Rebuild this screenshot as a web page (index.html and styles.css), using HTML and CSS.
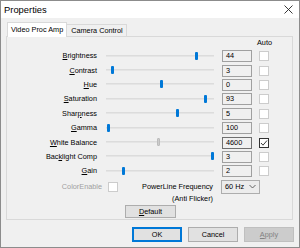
FILE: index.html
```html
<!DOCTYPE html>
<html>
<head>
<meta charset="utf-8">
<link rel="stylesheet" href="styles.css">
</head>
<body>
<div class="window">
  <div class="titlebar">
    <span class="title">Properties</span>
    <svg class="close" width="9" height="9" viewBox="0 0 9 9"><path d="M0.5 0.5L8.5 8.5M8.5 0.5L0.5 8.5" stroke="#222" stroke-width="0.9" fill="none"/></svg>
  </div>
  <div class="body">
    <div class="tabs">
      <div class="tab active">Video Proc Amp</div>
      <div class="tab">Camera Control</div>
    </div>
    <div class="panel">
      <div class="auto-head">Auto</div>
      <div class="grid">
        <div class="lbl"><u>B</u>rightness</div>
        <div class="slider"><div class="track"></div><div class="thumb" style="left:89px"></div></div>
        <div class="cell-val"><div class="val">44</div></div>
        <div class="cell-chk"><div class="chk"></div></div>

        <div class="lbl"><u>C</u>ontrast</div>
        <div class="slider"><div class="track"></div><div class="thumb" style="left:5px"></div></div>
        <div class="cell-val"><div class="val">3</div></div>
        <div class="cell-chk"><div class="chk"></div></div>

        <div class="lbl"><u>H</u>ue</div>
        <div class="slider"><div class="track"></div><div class="thumb" style="left:54px"></div></div>
        <div class="cell-val"><div class="val">0</div></div>
        <div class="cell-chk"><div class="chk"></div></div>

        <div class="lbl"><u>S</u>aturation</div>
        <div class="slider"><div class="track"></div><div class="thumb" style="left:98px"></div></div>
        <div class="cell-val"><div class="val">93</div></div>
        <div class="cell-chk"><div class="chk"></div></div>

        <div class="lbl">Shar<u>p</u>ness</div>
        <div class="slider"><div class="track"></div><div class="thumb" style="left:70px"></div></div>
        <div class="cell-val"><div class="val">5</div></div>
        <div class="cell-chk"><div class="chk"></div></div>

        <div class="lbl"><u>G</u>amma</div>
        <div class="slider"><div class="track"></div><div class="thumb" style="left:1px"></div></div>
        <div class="cell-val"><div class="val">100</div></div>
        <div class="cell-chk"><div class="chk"></div></div>

        <div class="lbl"><u>W</u>hite Balance</div>
        <div class="slider"><div class="track"></div><div class="thumb disabled" style="left:51px"></div></div>
        <div class="cell-val"><div class="val focus">4600</div></div>
        <div class="cell-chk"><div class="chk checked"><svg width="8" height="8" viewBox="0 0 8 8"><path d="M1 4L3 6.2L7 1.5" stroke="#222" stroke-width="0.9" fill="none"/></svg></div></div>

        <div class="lbl">Bac<u>k</u>light Comp</div>
        <div class="slider"><div class="track"></div><div class="thumb" style="left:105px"></div></div>
        <div class="cell-val"><div class="val">3</div></div>
        <div class="cell-chk"><div class="chk"></div></div>

        <div class="lbl"><u>G</u>ain</div>
        <div class="slider"><div class="track"></div><div class="thumb" style="left:16px"></div></div>
        <div class="cell-val"><div class="val">2</div></div>
        <div class="cell-chk"><div class="chk"></div></div>
      </div>

      <div class="extra">
        <div class="ce-label">ColorEnable</div>
        <div class="chk ce-chk"></div>
        <div class="plf">PowerLine Frequency<br>(Anti Flicker)</div>
        <div class="combo"><span>60 Hz</span><svg width="7" height="5" viewBox="0 0 7 5"><path d="M0.5 1L3.5 4L6.5 1" stroke="#555" stroke-width="0.9" fill="none"/></svg></div>
      </div>

      <div class="default-row"><div class="btn default-btn"><u>D</u>efault</div></div>
    </div>
    <div class="buttons">
      <div class="btn ok">OK</div>
      <div class="btn">Cancel</div>
      <div class="btn disabled-btn"><u>A</u>pply</div>
    </div>
  </div>
</div>
</body>
</html>
```

FILE: styles.css
```css
html, body {
  margin: 0;
  padding: 0;
  background: #f0f0f0;
}

.window {
  width: 300px;
  height: 248px;
  box-sizing: border-box;
  border: 1px solid #8c8c8c;
  background: #f0f0f0;
  font-family: "Liberation Sans", Arial, sans-serif;
  font-size: 7.3px;
  color: #000;
  overflow: hidden;
}

.titlebar {
  height: 17px;
  background: #ffffff;
  display: flex;
  align-items: center;
  justify-content: space-between;
  padding: 0 6px 0 3px;
}

.title {
  font-size: 9.4px;
  margin-top: -1px;
}

.close {
  display: block;
  margin-top: -1px;
}

.body {
  padding: 0 6px 0 5px;
}

.tabs {
  display: flex;
  align-items: flex-end;
  height: 15px;
  margin-top: 4px;
  position: relative;
  z-index: 2;
}

.tab {
  box-sizing: border-box;
  height: 12px;
  margin-bottom: 1px;
  padding: 0 3px;
  border: 1px solid #d9d9d9;
  border-bottom: none;
  background: #f0f0f0;
  line-height: 11px;
  white-space: nowrap;
}

.tab.active {
  height: 15px;
  margin-bottom: 0;
  margin-left: 1px;
  background: #ffffff;
  line-height: 13px;
  padding: 0 3px;
}

.tab:not(.active) {
  border-left: none;
  padding: 0 3px 0 4px;
}

.panel {
  box-sizing: border-box;
  height: 184px;
  margin-top: -1px;
  border: 1px solid #d9d9d9;
  background: #f0f0f0;
  position: relative;
  z-index: 1;
}

.auto-head {
  height: 12px;
  line-height: 12px;
  padding-left: 250px;
  padding-top: 0;
}

.grid {
  display: grid;
  grid-template-columns: 90px 117px 38px 17px;
  grid-auto-rows: 14.4px;
  align-items: center;
}

.lbl {
  text-align: right;
  white-space: nowrap;
  line-height: 12px;
}

.lbl u, .btn u {
  text-decoration: underline;
  text-underline-offset: 1px;
  text-decoration-thickness: 1px;
}

.slider {
  position: relative;
  margin-left: 9px;
  height: 9px;
}

.track {
  position: absolute;
  left: 0;
  right: 0;
  top: 3px;
  height: 2px;
  background: #e5e5e5;
  border-top: 1px solid #dcdcdc;
  box-sizing: border-box;
}

.thumb {
  position: absolute;
  top: 0;
  width: 3px;
  height: 8px;
  background: #0078d7;
  border-radius: 1px;
}

.thumb.disabled {
  background: #cccccc;
  border: 1px solid #bcbcbc;
  box-sizing: border-box;
}

.cell-val {
  display: flex;
  justify-content: flex-end;
}

.val {
  box-sizing: border-box;
  width: 30px;
  height: 12px;
  border: 1px solid #a0a0a0;
  background: #f0f0f0;
  padding-left: 3px;
  line-height: 10px;
}

.val.focus {
  border-color: #6f6f6f;
}

.cell-chk {
  display: flex;
}

.chk {
  box-sizing: border-box;
  width: 10px;
  height: 10px;
  margin-left: 7px;
  border: 1px solid #cccccc;
  background: #ffffff;
}

.chk.checked {
  border-color: #333333;
  display: flex;
  align-items: center;
  justify-content: center;
}

.chk.checked svg {
  display: block;
}

.extra {
  display: flex;
  align-items: flex-start;
  height: 14px;
  margin-top: 1.4px;
}

.ce-label {
  width: 95px;
  text-align: right;
  color: #a0a0a0;
  line-height: 14px;
}

.ce-chk {
  margin-left: 6px;
  margin-top: 2px;
}

.plf {
  width: 95px;
  text-align: right;
  line-height: 12px;
  margin-top: 1px;
  white-space: nowrap;
}

.combo {
  box-sizing: border-box;
  width: 39px;
  height: 14px;
  margin-left: 8px;
  border: 1px solid #adadad;
  background: #ececec;
  display: flex;
  align-items: center;
  justify-content: space-between;
  padding: 0 3px;
  line-height: 12px;
}

.combo svg {
  display: block;
}

.default-row {
  margin-top: 11px;
  padding-left: 118px;
  display: flex;
}

.btn {
  box-sizing: border-box;
  height: 15px;
  width: 50px;
  border: 1px solid #adadad;
  background: #e1e1e1;
  text-align: center;
  line-height: 13px;
  white-space: nowrap;
}

.default-btn {
  width: 51px;
  height: 13px;
  line-height: 11px;
}

.buttons {
  display: flex;
  justify-content: flex-end;
  gap: 6px;
  margin-top: 7px;
  margin-right: -1px;
}

.btn.ok {
  border: 1px solid #0078d7;
  box-shadow: inset 0 0 0 1px #0078d7;
}

.btn.disabled-btn {
  background: #cccccc;
  border-color: #bfbfbf;
  color: #838383;
}
```
